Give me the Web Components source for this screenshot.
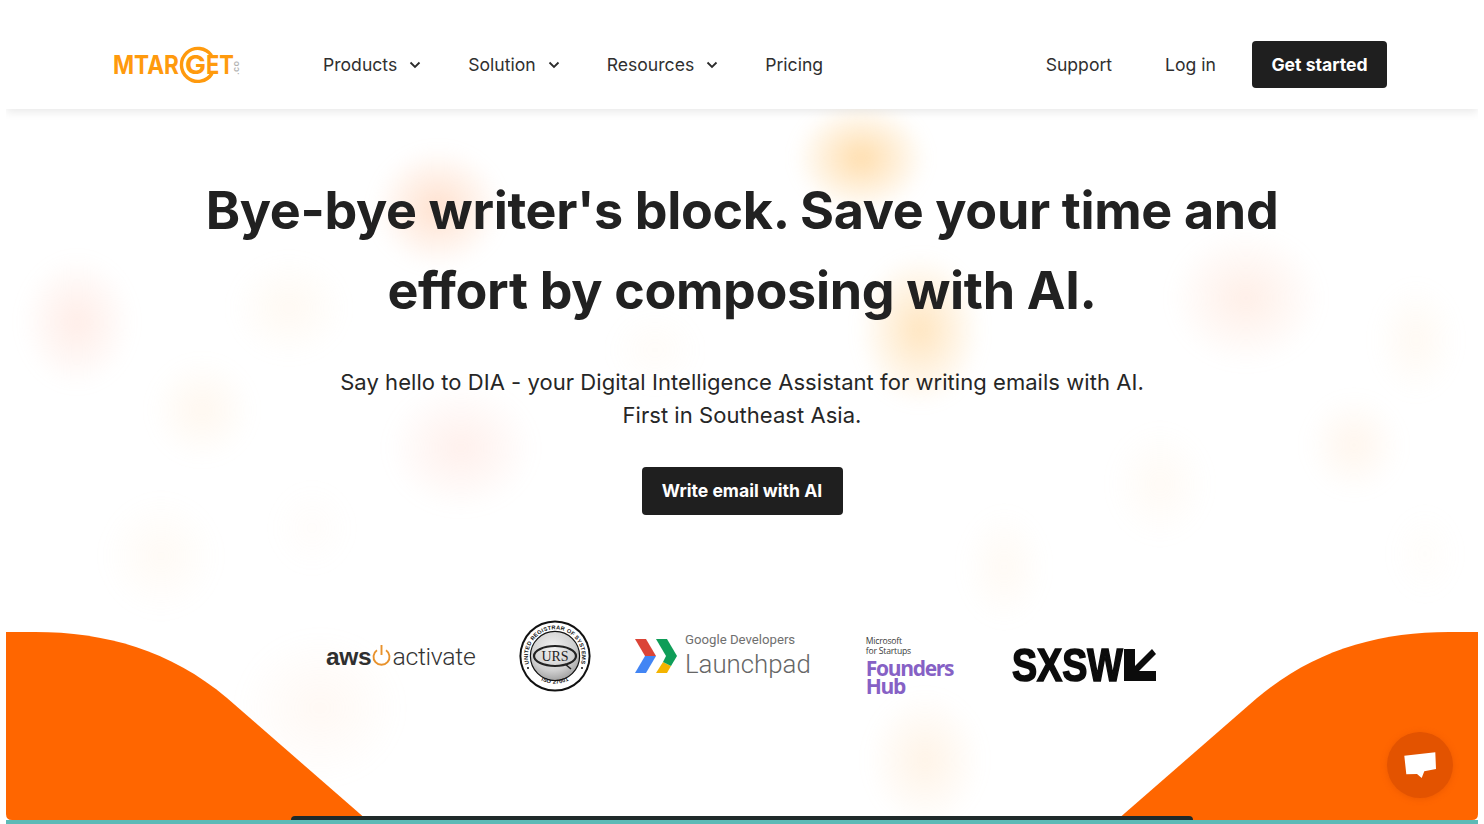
<!DOCTYPE html>
<html lang="en">
<head>
<meta charset="utf-8">
<title>MTarget</title>
<style>
  html, body { margin: 0; height: 100%; background: #fff; overflow: hidden; }
  body { font-family: Inter, "Liberation Sans", sans-serif; color: #212121; }
</style>
</head>
<body>
<landing-page>
  <site-header></site-header>
  <hero-intro>
    <span slot="title">Bye-bye writer's block. Save your time and<br>effort by composing with AI.</span>
    <span slot="lead">Say hello to DIA - your Digital Intelligence Assistant for writing emails with AI.<br>First in Southeast Asia.</span>
    <span slot="action">Write email with AI</span>
  </hero-intro>
  <partner-strip></partner-strip>
</landing-page>
<chat-fab></chat-fab>

<script>
const pageTemplate = document.createElement('template');
pageTemplate.innerHTML = `
  <style>
    :host {
      display: flex;
      flex-direction: column;
      position: relative;
      height: 824px;
      margin: 0 6px;
      overflow: hidden;
      background: #fff;
    }
    .foot {
      margin-top: auto;
      position: relative;
      display: flex;
      flex-direction: column;
    }
    .bar {
      height: 4px;
      margin: 0 285px;
      background: #1f2a2a;
      border-radius: 8px 8px 0 0;
    }
    .strip {
      height: 4px;
      background: #5cbab6;
    }
    .waves {
      position: absolute;
      left: 0;
      bottom: 4px;
      width: 1472px;
      height: 188px;
    }
    ::slotted(*) { position: relative; }
  </style>
  <glow-field></glow-field>
  <svg class="waves" viewBox="6 632 1472 188" aria-hidden="true">
    <path fill="#ff6600" d="M6 632H35C105 632 170 650 227 698L367 820H12Q6 820 6 814Z"/>
    <path fill="#ff6600" d="M1478 632H1449C1379 632 1314 650 1257 698L1117 820H1472Q1478 820 1478 814Z"/>
  </svg>
  <slot></slot>
  <div class="foot">
    <div class="bar"></div>
    <div class="strip"></div>
  </div>
`;

class LandingPage extends HTMLElement {
  constructor() {
    super();
    this.attachShadow({ mode: 'open' });
    this.shadowRoot.appendChild(pageTemplate.content.cloneNode(true));
  }
}

// soft coloured spots behind the hero, x/y in window coordinates
const GLOWS = [
  [861, 158, 66, 54, '255,196,110', .58],
  [438, 208, 64, 60, '255,190,150', .48],
  [77, 322, 56, 66, '255,190,170', .28],
  [289, 308, 58, 52, '255,215,170', .15],
  [920, 330, 62, 76, '255,200,120', .48],
  [1246, 298, 76, 68, '255,190,160', .25],
  [1416, 340, 42, 58, '255,215,170', .15],
  [202, 410, 52, 52, '255,210,160', .17],
  [461, 448, 74, 64, '255,180,160', .2],
  [1354, 445, 48, 50, '255,205,160', .19],
  [1160, 484, 50, 58, '255,215,170', .12],
  [161, 556, 58, 60, '255,215,170', .12],
  [312, 528, 40, 44, '255,215,190', .07],
  [1004, 567, 42, 58, '255,215,170', .13],
  [1425, 554, 34, 46, '255,225,190', .07],
  [655, 350, 46, 42, '255,215,170', .08],
  [320, 708, 82, 76, '255,205,170', .13],
  [925, 760, 58, 68, '255,200,140', .21]
];

class GlowField extends HTMLElement {
  constructor() {
    super();
    this.attachShadow({ mode: 'open' });
    const spots = GLOWS.map(([x, y, rx, ry, rgb, a]) => `
      <i style="left:${x - 6 - rx}px;top:${y - ry}px;width:${rx * 2}px;height:${ry * 2}px;
        background:radial-gradient(closest-side,rgba(${rgb},${a}),rgba(${rgb},${a * .5}) 50%,rgba(${rgb},0))"></i>`).join('');
    this.shadowRoot.innerHTML = `
      <style>
        :host { position: absolute; inset: 0; display: block; }
        i { position: absolute; display: block; border-radius: 50%; filter: blur(8px); }
      </style>${spots}`;
  }
}

const headerTemplate = document.createElement('template');
headerTemplate.innerHTML = `
  <style>
    :host {
      display: flex;
      align-items: center;
      flex: none;
      position: relative;
      z-index: 2;
      height: 109px;
      padding: 19px 91px 0 107px;
      box-sizing: border-box;
      background: #fff;
      box-shadow: 0 3px 9px rgba(0, 0, 0, .09);
      font-size: 17.6px;
      color: #2f2f2f;
    }
    nav { display: flex; align-items: center; gap: 47px; margin-left: 84px; }
    .item { display: flex; align-items: center; gap: 12px; }
    .item svg { width: 12px; height: 8px; margin-top: 1px; }
    .right { display: flex; align-items: center; margin-left: auto; }
    .right .login { margin-left: 53px; margin-right: 36px; }
    .cta {
      display: flex;
      align-items: center;
      justify-content: center;
      width: 135px;
      height: 47px;
      background: #1f1f1f;
      color: #fff;
      border-radius: 4px;
      font-weight: 700;
    }
  </style>
  <brand-logo></brand-logo>
  <nav>
    <span class="item">Products <svg viewBox="0 0 12 8"><path d="M1.5 1.5 6 6l4.5-4.5" fill="none" stroke="#2b2b2b" stroke-width="1.8"/></svg></span>
    <span class="item">Solution <svg viewBox="0 0 12 8"><path d="M1.5 1.5 6 6l4.5-4.5" fill="none" stroke="#2b2b2b" stroke-width="1.8"/></svg></span>
    <span class="item">Resources <svg viewBox="0 0 12 8"><path d="M1.5 1.5 6 6l4.5-4.5" fill="none" stroke="#2b2b2b" stroke-width="1.8"/></svg></span>
    <span class="item">Pricing</span>
  </nav>
  <div class="right">
    <span>Support</span>
    <span class="login">Log in</span>
    <span class="cta">Get started</span>
  </div>
`;

class SiteHeader extends HTMLElement {
  constructor() {
    super();
    this.attachShadow({ mode: 'open' });
    this.shadowRoot.appendChild(headerTemplate.content.cloneNode(true));
  }
}

class BrandLogo extends HTMLElement {
  constructor() {
    super();
    this.attachShadow({ mode: 'open' });
    this.shadowRoot.innerHTML = `
      <style>
        :host { display: block; width: 126px; height: 36px; }
        svg { display: block; overflow: visible; }
        text { font-family: Inter, sans-serif; font-weight: 700; fill: #ff9a0d; }
      </style>
      <svg width="126" height="36" viewBox="0 0 126 36">
        <text x="0" y="28" font-size="26" textLength="66" lengthAdjust="spacingAndGlyphs">MTAR</text>
        <path d="M98.5 9.5A16.5 16.5 0 1 0 99 27.5" fill="none" stroke="#ff9a0d" stroke-width="3.4"/>
        <text x="72" y="28" font-size="26" textLength="21" lengthAdjust="spacingAndGlyphs">G</text>
        <text x="93" y="28" font-size="26" textLength="28" lengthAdjust="spacingAndGlyphs">ET</text>
        <text transform="translate(126 29) rotate(-90)" font-size="9" style="fill:#b2b2b2;font-weight:600" textLength="14">.co</text>
      </svg>`;
  }
}

const heroTemplate = document.createElement('template');
heroTemplate.innerHTML = `
  <style>
    :host {
      display: flex;
      flex-direction: column;
      align-items: center;
      flex: none;
      padding-top: 62px;
      text-align: center;
    }
    h1 {
      margin: 0;
      font-size: 52px;
      line-height: 80px;
      font-weight: 700;
      letter-spacing: -.33px;
      color: #212121;
    }
    p {
      margin: 35px 0 35px;
      font-size: 22px;
      line-height: 33px;
      letter-spacing: .05px;
      color: #262626;
    }
    .action {
      display: flex;
      align-items: center;
      justify-content: center;
      box-sizing: border-box;
      width: 201px;
      height: 48px;
      padding-bottom: 1px;
      background: #1f1f1f;
      color: #fff;
      border-radius: 4px;
      font-size: 17.6px;
      font-weight: 700;
    }
  </style>
  <h1><slot name="title"></slot></h1>
  <p><slot name="lead"></slot></p>
  <div class="action"><slot name="action"></slot></div>
`;

class HeroIntro extends HTMLElement {
  constructor() {
    super();
    this.attachShadow({ mode: 'open' });
    this.shadowRoot.appendChild(heroTemplate.content.cloneNode(true));
  }
}

const partnerTemplate = document.createElement('template');
partnerTemplate.innerHTML = `
  <style>
    :host {
      display: flex;
      align-items: center;
      flex: none;
      height: 72px;
      margin-top: 105px;
      padding-left: 320px;
    }
    .aws { display: flex; align-items: center; width: 149px; height: 30px; color: #2f2f2f; font-family: "Liberation Sans", sans-serif; margin-top: 1px; white-space: nowrap; }
    .aws b { font-size: 24.5px; letter-spacing: -.3px; line-height: 30px; }
    .aws svg { width: 19px; height: 22px; margin: -3px 1px 0 1px; flex: none; }
    .aws span { font-family: Roboto, sans-serif; font-weight: 300; font-size: 24.8px; line-height: 30px; color: #333; letter-spacing: -.3px; }
    .urs { width: 72px; height: 72px; margin-left: 44px; display: block; }
    .launch { display: flex; align-items: flex-start; margin-left: 44px; }
    .launch svg { width: 42px; height: 36px; margin-top: 6px; flex: none; }
    .launch > div { margin-left: 8px; font-family: Roboto, sans-serif; color: #6f6f6f; white-space: nowrap; }
    .launch .g { font-size: 13.2px; line-height: 16px; }
    .launch .l { font-size: 25.8px; font-weight: 300; line-height: 32px; color: #666; }
    .hub { margin-left: 55px; margin-top: 18px; width: 87px; font-family: "Open Sans", sans-serif; }
    .hub small { display: block; font-size: 8.6px; line-height: 10px; color: #3a3a3a; white-space: nowrap; letter-spacing: -.2px; }
    .hub strong { display: block; margin-top: 3px; font-size: 21px; line-height: 18px; font-weight: 700; letter-spacing: -1.3px; color: #8661c5; }
    .sxsw { display: flex; align-items: center; margin-left: 59px; margin-top: 18px; }
    .sxsw span {
      display: block;
      width: 112px;
      font-family: "Liberation Sans", sans-serif;
      font-weight: 700;
      font-size: 47px;
      line-height: 36px;
      color: #0c0c0c;
      -webkit-text-stroke: 1.7px #0c0c0c;
      transform: scaleX(.8);
      transform-origin: 0 50%;
      white-space: nowrap;
    }
    .sxsw svg { width: 32px; height: 32px; flex: none; }
  </style>
  <div class="aws">
    <b>aws</b>
    <svg viewBox="0 0 19 22"><path d="M5 6.2a8 8 0 1 0 9 0M9.5 1v10" fill="none" stroke="#e8922c" stroke-width="1.9"/></svg>
    <span>activate</span>
  </div>
  <svg class="urs" viewBox="0 0 72 72">
    <defs>
      <path id="arc-top" d="M16 54.5A27 27 0 1 1 56 54.5"/>
      <path id="arc-bottom" d="M10.5 48A28.5 28.5 0 0 0 61.5 48"/>
      <radialGradient id="silver" cx=".45" cy=".35" r=".75">
        <stop offset="0" stop-color="#f2f2f2"/>
        <stop offset=".6" stop-color="#cfcfcf"/>
        <stop offset="1" stop-color="#8d8d8d"/>
      </radialGradient>
    </defs>
    <circle cx="36" cy="36" r="35.6" fill="#111"/>
    <circle cx="36" cy="36" r="33.6" fill="#fff"/>
    <circle cx="36" cy="36" r="24.6" fill="url(#silver)" stroke="#111" stroke-width="1.2"/>
    <text font-family="Liberation Sans, sans-serif" font-size="5.6" font-weight="700" fill="#111" letter-spacing=".25"><textPath href="#arc-top" startOffset="50%" text-anchor="middle">UNITED REGISTRAR OF SYSTEMS</textPath></text>
    <text font-family="Liberation Sans, sans-serif" font-size="5.6" font-weight="700" fill="#111" letter-spacing=".25"><textPath href="#arc-bottom" startOffset="50%" text-anchor="middle">ISO 27001</textPath></text>
    <circle cx="9" cy="48" r="1" fill="#111"/>
    <circle cx="63" cy="48" r="1" fill="#111"/>
    <ellipse cx="36" cy="36" rx="21" ry="10" fill="none" stroke="#222" stroke-width="2.2"/>
    <path d="M46 44l6 5" stroke="#222" stroke-width="1.6"/>
    <text x="36" y="41" text-anchor="middle" font-family="Liberation Serif, serif" font-size="14" fill="#222" textLength="27">URS</text>
  </svg>
  <div class="launch">
    <svg viewBox="634 636 42 36">
      <polygon fill="#db4437" points="634,637 645,637 655,654 644,654"/>
      <polygon fill="#4285f4" points="634,671 645,671 655,654 644,654"/>
      <polygon fill="#0f9d58" points="655,637 666,637 676,654 665,654"/>
      <polygon fill="#f4b400" points="655,671 666,671 670,664 662,660"/>
      <polygon fill="#0f9d58" points="665,654 676,654 670,664 662,660"/>
    </svg>
    <div>
      <div class="g">Google Developers</div>
      <div class="l">Launchpad</div>
    </div>
  </div>
  <div class="hub">
    <small>Microsoft</small>
    <small>for Startups</small>
    <strong>Founders Hub</strong>
  </div>
  <div class="sxsw">
    <span>SXSW</span>
    <svg viewBox="0 0 32 32"><polygon fill="#0c0c0c" points="0,0 11,0 11,17 28,0 32,5 15,22 32,22 32,32 0,32"/></svg>
  </div>
`;

class PartnerStrip extends HTMLElement {
  constructor() {
    super();
    this.attachShadow({ mode: 'open' });
    this.shadowRoot.appendChild(partnerTemplate.content.cloneNode(true));
  }
}

class ChatFab extends HTMLElement {
  constructor() {
    super();
    this.attachShadow({ mode: 'open' });
    this.shadowRoot.innerHTML = `
      <style>
        :host {
          position: fixed;
          right: 31px;
          bottom: 26px;
          display: flex;
          align-items: center;
          justify-content: center;
          width: 66px;
          height: 66px;
          border-radius: 50%;
          background: #e35300;
          box-shadow: 0 1px 6px rgba(200, 70, 0, .35);
        }
        svg { width: 34px; height: 28px; display: block; }
      </style>
      <svg viewBox="1402 752 34 28"><polygon fill="#fff" points="1403.3,756.7 1434.3,753.3 1435,770 1423.3,772.3 1420.7,779 1416,775 1405.3,775.3"/></svg>`;
  }
}

customElements.define('landing-page', LandingPage);
customElements.define('glow-field', GlowField);
customElements.define('site-header', SiteHeader);
customElements.define('brand-logo', BrandLogo);
customElements.define('hero-intro', HeroIntro);
customElements.define('partner-strip', PartnerStrip);
customElements.define('chat-fab', ChatFab);
</script>
</body>
</html>
